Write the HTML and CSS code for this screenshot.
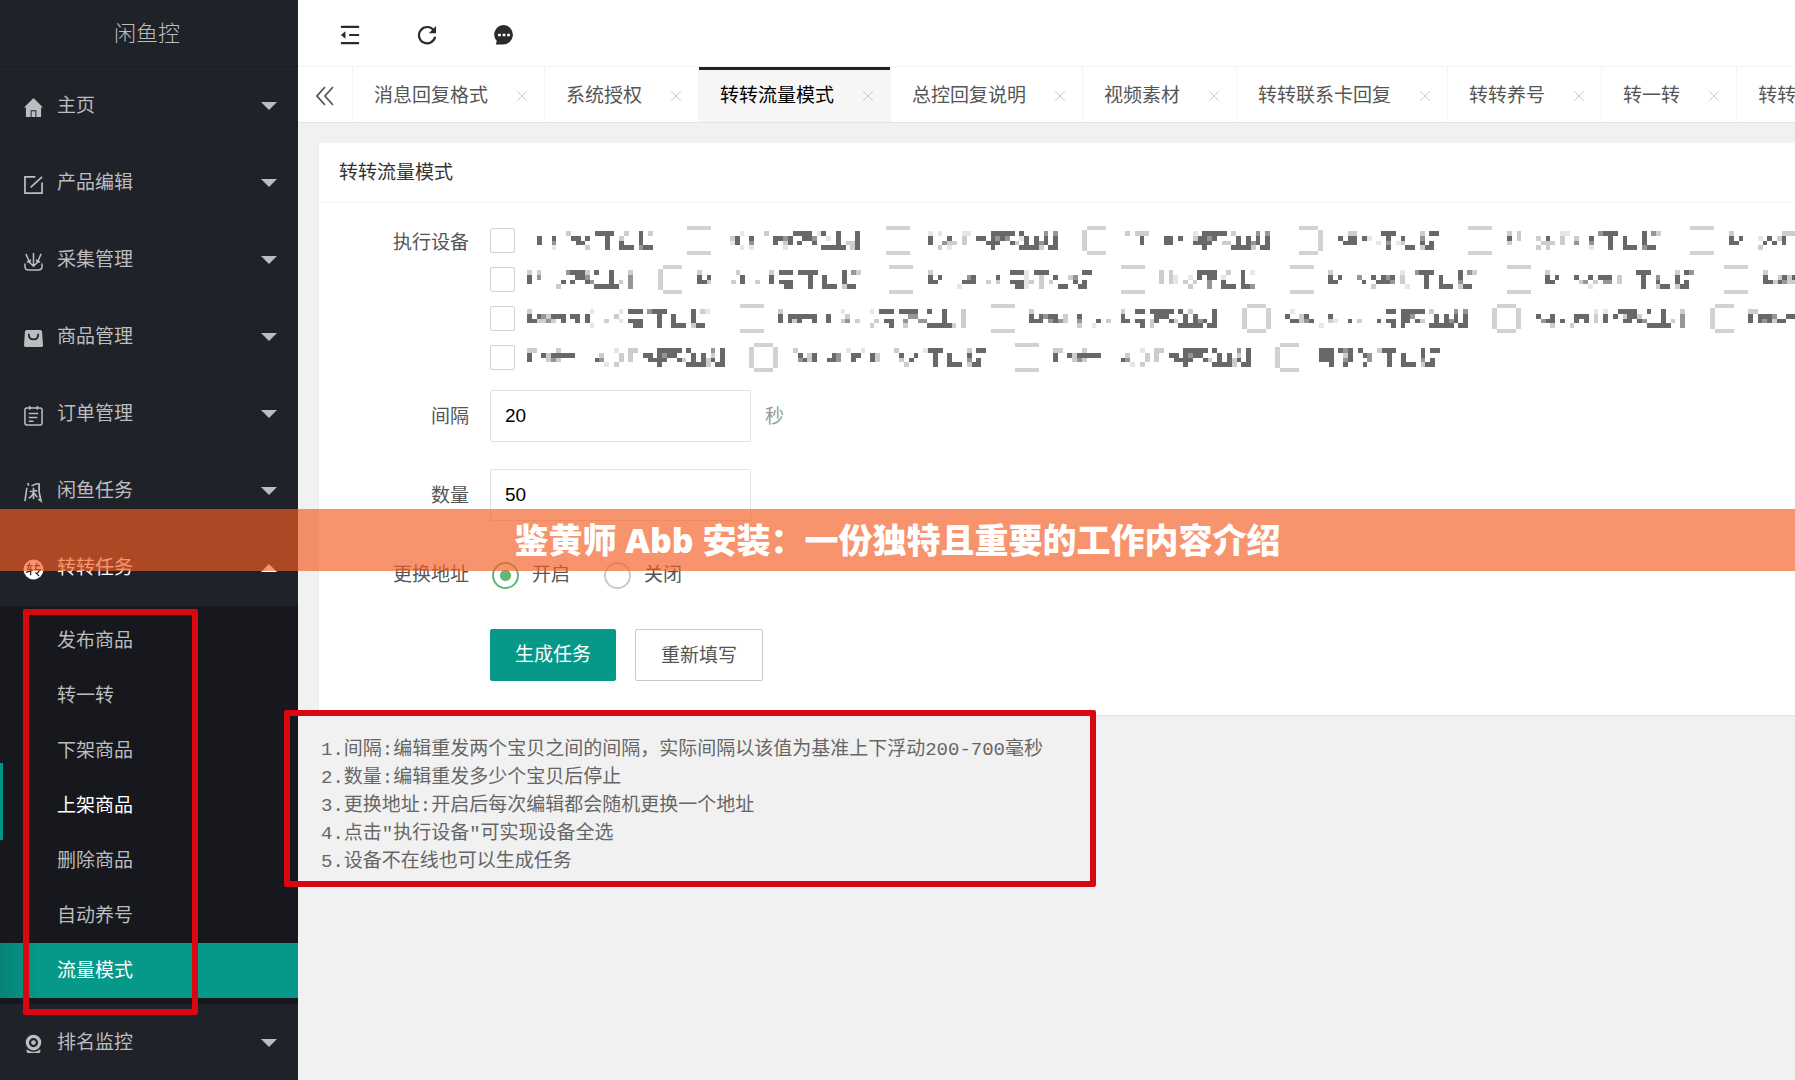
FILE: index.html
```html
<!DOCTYPE html>
<html lang="zh-CN">
<head>
<meta charset="utf-8">
<title>闲鱼控</title>
<link rel="stylesheet" href="styles.css">
</head>
<body>
<div class="layout">
  <aside class="sidebar">
    <div class="brand">闲鱼控</div>
    <nav>
      <ul class="menu">
        <li><a class="menu-link" href="#"><svg class="icon" viewBox="0 0 20 20"><path fill="currentColor" fill-rule="evenodd" d="M10 0 20 10h-2v10H2V10H0zM7 20h1v-6h4v6h1v-7H7z"/></svg><span>主页</span><i class="caret"></i></a></li>
        <li><a class="menu-link" href="#"><svg class="icon" viewBox="0 0 20 20" fill="none" stroke="currentColor" stroke-width="1.8"><path d="M12 2H1v17h18V8M7 13 19 2"/></svg><span>产品编辑</span><i class="caret"></i></a></li>
        <li><a class="menu-link" href="#"><svg class="icon" viewBox="0 0 20 20" fill="none" stroke="currentColor" stroke-width="1.6"><path d="M10 1v14M6 11l4 4 4-4M2 2l4 9M3 10l3 1 1-3M18 2l-4 9M17 10l-3 1-1-3M1 12v3q0 4 4 4h10q4 0 4-4v-3"/></svg><span>采集管理</span><i class="caret"></i></a></li>
        <li><a class="menu-link" href="#"><svg class="icon" viewBox="0 0 20 20"><path fill="currentColor" d="M3 1h14q2 0 2 2l1 14q0 2-2 2H2q-2 0-2-2L1 3q0-2 2-2z"/><path d="M5 5q0 6 5 6t5-6" fill="none" stroke="#20222a" stroke-width="1.8"/></svg><span>商品管理</span><i class="caret"></i></a></li>
        <li><a class="menu-link" href="#"><svg class="icon" viewBox="0 0 20 20" fill="none" stroke="currentColor" stroke-width="1.6"><rect x="1" y="2" width="18" height="18" rx="2"/><path d="M6 0v4M14 0v4M5 8h10M5 12h9M5 16h5"/></svg><span>订单管理</span><i class="caret"></i></a></li>
        <li><a class="menu-link" href="#"><svg class="icon" viewBox="0 0 20 20" fill="none" stroke="currentColor" stroke-width="1.7"><path d="M4 0l1 3M3 5 1 19M8 3q6-3 8-2-1 9 2 18l-3-2M6 9l8-1M10 5v12M10 9q-1 5-5 7M10 10l4 5"/></svg><span>闲鱼任务</span><i class="caret"></i></a></li>
        <li>
          <a class="menu-link is-open" href="#"><svg class="icon" viewBox="0 0 20 20"><circle cx="10" cy="10" r="10.5" fill="currentColor"/><path d="M3 6h6M6 3 4 10h5M7 7v9M2 13l7-2M11 6h6M14 3l-2 7h6M12 10h5l-3 4M12 13l4 4" fill="none" stroke="#20222a" stroke-width="1.3"/></svg><span>转转任务</span><i class="caret caret-up"></i></a>
          <ul class="submenu">
            <li><a href="#">发布商品</a></li>
            <li><a href="#">转一转</a></li>
            <li><a href="#">下架商品</a></li>
            <li><a class="is-hover" href="#">上架商品</a></li>
            <li><a href="#">删除商品</a></li>
            <li><a href="#">自动养号</a></li>
            <li><a class="is-active" href="#">流量模式</a></li>
            <li class="hover-bar" aria-hidden="true"></li>
            <li class="mark mark-menu" aria-hidden="true"></li>
          </ul>
        </li>
        <li><a class="menu-link" href="#"><svg class="icon" viewBox="0 0 20 20" fill="none" stroke="currentColor"><circle cx="10" cy="8" r="6.500" stroke-width="3.400"/><circle cx="10" cy="8" r="2.500" fill="currentColor" stroke="none"/><path d="M3 15q-1 3 1 4h12q2-1 1-4-3 3-7 3t-7-3z" fill="currentColor" stroke="none"/></svg><span>排名监控</span><i class="caret"></i></a></li>
      </ul>
    </nav>
  </aside>

  <div class="main">
    <header class="toolbar">
      <button type="button" aria-label="收起菜单"><svg viewBox="0 0 22 22"><path d="M1 2h20M10 11h11M1 20h20" stroke="currentColor" stroke-width="2.4"/><path d="M1 11l5-4v8z" fill="currentColor"/></svg></button>
      <button type="button" aria-label="刷新"><svg viewBox="0 0 22 22"><path d="M18.500 6A9 9 0 1 0 20 13" fill="none" stroke="currentColor" stroke-width="2.4"/><path d="M21 1v8h-8z" fill="currentColor"/></svg></button>
      <button type="button" aria-label="消息"><svg viewBox="0 0 22 22"><path d="M11 0A10.500 10.500 0 1 1 9 21.500H2l1-4A10.500 10.500 0 0 1 11 0z" fill="currentColor"/><path d="M4.500 9.500h3v3h-3zM9.500 9.500h3v3h-3zM14.500 9.500h3v3h-3z" fill="#fff"/></svg></button>
    </header>

    <nav class="tabs">
      <button class="tabs-prev" type="button" aria-label="向左"><svg viewBox="0 0 20 20"><path d="M10 1 2 10l8 9M18 1l-8 9 8 9" fill="none" stroke="currentColor" stroke-width="1.800"/></svg></button>
      <a class="tab" href="#">消息回复格式<svg viewBox="0 0 12 12"><path d="M1 1l10 10M11 1 1 11"/></svg></a>
      <a class="tab" href="#">系统授权<svg viewBox="0 0 12 12"><path d="M1 1l10 10M11 1 1 11"/></svg></a>
      <a class="tab is-current" href="#">转转流量模式<svg viewBox="0 0 12 12"><path d="M1 1l10 10M11 1 1 11"/></svg></a>
      <a class="tab" href="#">总控回复说明<svg viewBox="0 0 12 12"><path d="M1 1l10 10M11 1 1 11"/></svg></a>
      <a class="tab" href="#">视频素材<svg viewBox="0 0 12 12"><path d="M1 1l10 10M11 1 1 11"/></svg></a>
      <a class="tab" href="#">转转联系卡回复<svg viewBox="0 0 12 12"><path d="M1 1l10 10M11 1 1 11"/></svg></a>
      <a class="tab" href="#">转转养号<svg viewBox="0 0 12 12"><path d="M1 1l10 10M11 1 1 11"/></svg></a>
      <a class="tab" href="#">转一转<svg viewBox="0 0 12 12"><path d="M1 1l10 10M11 1 1 11"/></svg></a>
      <a class="tab" href="#">转转<svg viewBox="0 0 12 12"><path d="M1 1l10 10M11 1 1 11"/></svg></a>
    </nav>

    <main class="content">
      <section class="card">
        <h1 class="card-title">转转流量模式</h1>
        <form class="form">
          <div class="field field-devices">
            <span class="field-name">执行设备</span>
            <div class="devices" id="devices" role="group" aria-label="执行设备"></div>
          </div>
          <div class="field">
            <label class="field-name" for="interval">间隔</label>
            <input class="text" id="interval" type="text" value="20">
            <span class="unit">秒</span>
          </div>
          <div class="field">
            <label class="field-name" for="amount">数量</label>
            <input class="text" id="amount" type="text" value="50">
          </div>
          <div class="field">
            <span class="field-name">更换地址</span>
            <div class="radios">
              <label><input type="radio" name="swap" checked>开启</label>
              <label><input type="radio" name="swap">关闭</label>
            </div>
          </div>
          <div class="actions">
            <button class="btn btn-primary" type="button">生成任务</button>
            <button class="btn" type="reset">重新填写</button>
          </div>
        </form>
      </section>
      <div class="notes">
<pre>1.间隔:编辑重发两个宝贝之间的间隔，实际间隔以该值为基准上下浮动200-700毫秒
2.数量:编辑重发多少个宝贝后停止
3.更换地址:开启后每次编辑都会随机更换一个地址
4.点击"执行设备"可实现设备全选
5.设备不在线也可以生成任务</pre>
        <div class="mark mark-notes" aria-hidden="true"></div>
      </div>
    </main>
  </div>
</div>
<div class="banner">鉴黄师 Abb 安装：一份独特且重要的工作内容介绍</div>
<script src="devices.js"></script>
</body>
</html>
```
FILE: styles.css
```css
* { box-sizing: border-box; }

body {
  margin: 0;
  font: 19px/28px "Liberation Sans", "Noto Sans CJK SC", sans-serif;
  color: #555;
  background: #f1f1f1;
}

ul { list-style: none; margin: 0; padding: 0; }
a { color: inherit; text-decoration: none; }
button, input { font: inherit; color: inherit; }

.layout {
  display: flex;
  height: 100vh;
  overflow: hidden;
}

/* Sidebar */
.sidebar {
  flex: none;
  width: 298px;
  background: #20222a;
  color: #bcbdbf;
}
.brand {
  height: 67px;
  line-height: 68px;
  padding-right: 4px;
  text-align: center;
  font-size: 22px;
  font-weight: 300;
  border-bottom: 1px solid #1a1c22;
}
.menu-link {
  display: flex;
  align-items: center;
  height: 77px;
  padding: 1px 21px 0 24px;
}
.menu-link span { flex: 1; margin-left: 14px; }
.icon { width: 19px; height: 19px; margin-top: 2px; overflow: visible; }
.caret {
  border: 8px solid transparent;
  border-top-color: currentColor;
  border-bottom-width: 0;
}
.caret-up {
  border-top-width: 0;
  border-bottom: 8px solid currentColor;
}
.is-open { color: #fff; }
.submenu {
  position: relative;
  padding: 7px 0 6px;
  background: #16181d;
}
.submenu a {
  display: block;
  padding-left: 57px;
  line-height: 55px;
}
.submenu .is-hover { color: #fff; }
.submenu .is-active {
  color: #fff;
  background: linear-gradient(90deg, #078375, #069888 40px);
}
.hover-bar {
  position: absolute;
  left: 0;
  top: 157px;
  width: 3px;
  height: 77px;
  background: #009688;
}

/* Red frames drawn over the page */
.mark {
  position: absolute;
  border: 6px solid #d9070f;
  border-radius: 2px;
  pointer-events: none;
}
.mark-menu { left: 23px; right: 100px; top: 3px; bottom: -11px; }
.mark-notes { left: -35px; top: -5px; width: 812px; height: 177px; }

/* Top bar */
.main { flex: 1; min-width: 0; }
.toolbar {
  display: flex;
  gap: 33px;
  height: 67px;
  padding: 0 30px;
  align-items: center;
  background: #fff;
  border-bottom: 1px solid #f4f4f4;
}
.toolbar button {
  display: flex;
  justify-content: center;
  width: 44px;
  padding: 3px 0 0;
  border: 0;
  background: none;
  color: #2b2b2b;
}
.toolbar svg { width: 22px; height: 20px; }

.tabs {
  display: flex;
  height: 56px;
  overflow: hidden;
  background: #fff;
  border-bottom: 1px solid #e3e3e3;
}
.tabs-prev {
  flex: none;
  display: flex;
  align-items: center;
  justify-content: center;
  width: 55px;
  padding: 2px 0 0;
  border: 0;
  border-right: 1px solid #f4f4f4;
  background: none;
}
.tabs-prev svg { width: 20px; height: 20px; }
.tab {
  flex: none;
  display: flex;
  align-items: center;
  gap: 28px;
  padding: 2px 16px 0 21px;
  border-right: 1px solid #f4f4f4;
}
.tab svg {
  width: 12px;
  height: 12px;
  stroke: #ccc;
  fill: none;
}
.is-current {
  background: #f6f6f6;
  color: #000;
  box-shadow: inset 0 3px #20222a;
}

/* Card */
.content { padding: 20px 0 0 21px; }
.card {
  background: #fff;
  border-radius: 2px 0 0 2px;
  box-shadow: 0 1px 2px rgba(0, 0, 0, .06);
}
.card-title {
  margin: 0;
  padding: 1px 20px 0;
  font-size: 19px;
  font-weight: 400;
  line-height: 58px;
  color: #333;
  border-bottom: 1px solid #f6f6f6;
}
.form { padding: 18px 0 34px; overflow: hidden; }
.field {
  display: flex;
  align-items: center;
  height: 52px;
  margin-bottom: 27px;
}
.field-name {
  flex: none;
  width: 150px;
  padding-top: 2px;
  margin-right: 21px;
  text-align: right;
}
.field-devices {
  align-items: flex-start;
  height: auto;
  margin-bottom: 13px;
}
.field-devices .field-name { line-height: 39px; }

.device-row { display: flex; height: 39px; }
.device { flex: none; display: flex; align-items: center; }
.device svg { flex: none; height: 19px; }
.device input {
  appearance: none;
  flex: none;
  width: 25px;
  height: 25px;
  margin: 0;
  border: 1px solid #d2d2d2;
  border-radius: 2px;
}

/* Masked tick boxes keep only some edges and no corners */
.device .bars, .device .open-right, .device .open-left, .device .ring {
  width: 24px;
  height: 29px;
  border: 0 solid #d2d2d2;
  border-width: 4px 0;
  border-radius: 0;
}
.device .open-right {
  border-left-width: 5px;
  clip-path: polygon(5px 0, 100% 0, 100% 100%, 5px 100%, 5px 25px, 0 25px, 0 4px, 5px 4px);
}
.device .open-left {
  border-right-width: 5px;
  clip-path: polygon(0 0, 19px 0, 19px 4px, 100% 4px, 100% 25px, 19px 25px, 19px 100%, 0 100%);
}
.device .ring {
  width: 29px;
  border-width: 4px 5px;
  clip-path: polygon(5px 0, 24px 0, 24px 4px, 100% 4px, 100% 25px, 24px 25px, 24px 100%, 5px 100%, 5px 25px, 0 25px, 0 4px, 5px 4px);
}

.text {
  width: 261px;
  height: 52px;
  padding: 0 14px;
  border: 1px solid #e2e2e2;
  border-radius: 2px;
  background: #fff;
  color: #000;
}
.unit { padding-top: 2px; margin-left: 14px; color: #999; }

.radios { display: flex; gap: 34px; padding: 2px 0 0 2px; }
.radios label { display: flex; align-items: center; gap: 13px; }
.radios input {
  appearance: none;
  width: 27px;
  height: 27px;
  margin: 0;
  border: 2px solid #c9c9c9;
  border-radius: 50%;
}
.radios input:checked {
  border-color: #5fb878;
  background: radial-gradient(circle, #5fb878 5px, transparent 6px);
}

.actions { display: flex; gap: 19px; padding-left: 171px; margin-top: 29px; }
.btn {
  height: 52px;
  padding: 1px 25px 0;
  border: 1px solid #c9c9c9;
  border-radius: 2px;
  background: #fff;
}
.btn-primary {
  padding: 0 24px;
  border-color: #069888;
  background: #069888;
  color: #fff;
}

/* Notes */
.notes { position: relative; padding: 21px 0 0 2px; }
.notes pre {
  margin: 0;
  font: 19px/28px "Liberation Mono", "Noto Sans CJK SC", monospace;
  color: #666;
}

/* Title strip over the page */
.banner {
  position: absolute;
  left: 0;
  right: 0;
  top: 509px;
  line-height: 62px;
  text-align: center;
  font-family: "Noto Sans", "Noto Sans CJK SC", sans-serif;
  font-size: 34px;
  font-weight: 900;
  color: #fff;
  background: rgba(244, 93, 34, .66);
}
```
FILE: devices.js
```js
// Device names are masked: each is a mosaic of four rows of cells.
// "#" dark, "+" medium, "-" light, ":" faint.
const CELL = 4.82;
const ORIGIN = 490;
const SHADES = { '#': '#686868', '+': '#969696', '-': '#cdcdcd', ':': '#e6e6e6' };

const LONG_NAME = [
  '--....-...........:..--....#####.#....+.#',
  '#..#-#####.....-...-.-..##.#+##...#.#.-.#',
  '#...-+-.......#+...-.-...####..#-.#.#-#.#',
  '................:.-........#.....####-.##'];

// [box style, box start, name start, mosaic]
const ROWS = [
  [
    ['', 490, 537, ['......-.....####..-..#.-', '#..#...##.#...#..-...#..', '#..+....##....#..#...#..', '...:......-...#..###.+##']],
    ['bars', 687, 730, ['..:....-.....####.:#..#...#', '-#..#....##+#..##+..:.#...#', ':#..+....#.-#.#..#....#.--#', '..:.:......:.......#####.-#']],
    ['bars', 886, 928, [':.:....::....#####.#....+.+', '#...#..-..##.#+#+..:#.#.#.#', '#..+--.-....###..#-.#.#+#.#', '..-.:........#.....####-.##']],
    ['open-right', 1082, 1125, ['-.---.........:.#####.-....+.+', '...#....##.#..-##+#....#.#.#.#', '...#....##....####..--.#.#+#.#', '................#.....####-.##']],
    ['open-left', 1299, 1338, ['..--.....###.....-.##', '#.##.#:...#..#...+...', '.###....:.+.:-...#.#.', '..........#...##.-##.']],
    ['bars', 1468, 1507, ['-.-........::......+###.....#.+-', '#.-...-.#..-..-..#...#..#...#...', '-......---.-..+..+...#..#...#...', '......-.-........:...#..###.+##.']],
    ['bars', 1690, 1729, ['-..........---', '#.#...:.#.-#..', '##.....#.#.#..', '......-.......']]
  ],
  [
    ['', 490, 527, ['-.-.....+###-.#..#...-', '#.+.......##+....#...+', '#......#.#..#+...#.-.+', '......-.......#####..+']],
    ['open-right', 658, 697, ['-.......-......-.###.####.....#.+-', '#.#......#.....#.......#..#...#...', '##-....-.#..-..#.###...#..#...#...', '..................##...#..###.-##.']],
    ['bars', 889, 928, ['-................###:.###.......##', '#.#.....+#....#.....:..-..#..-+...', '##.....###..-.-..###:-.-.-....#.#.', '......:...........##:..-...##..##.']],
    ['bars', 1121, 1159, ['-.-.....####..-..#.:', '-.-:..:.#.##.:...#..', '-.-:.-.-..+..#...#..', '......-...+..###.##+']],
    ['bars', 1290, 1328, ['-..............:..+###.....#.+-', '#.#...+..#.#+#.-....#..#...#...', '##.....#..###+.-....#..#...+...', '.........-......:...#..###.-##.']],
    ['bars', 1507, 1545, ['-..................###.....-.#+', '#.#...#..#.###.-....#..+...#...', '##.....-+.-.++.-....#..#...#.#.', '.........:..........#..-##.-##.']],
    ['bars', 1724, 1763, ['-......', '#..-#-#', '##-#+--', '.......']]
  ],
  [
    ['', 490, 527, ['-............:.....:.###.+###.....#.-:', '#.#+-###.##.#.....-........#..#...#...', '##--+-.#..#.#...-..:.###...#..#...#...', '.............:........##...#..###.-##.']],
    ['bars', 740, 778, ['-............:.....:.###.####..#..#...-', '#.######..#...-............++.....#...-', '#.#-#..#..#..-+.-...-.##..+..++...#...-', '...................-...#..-....#####-.-']],
    ['bars', 991, 1029, ['-..................-..##.#####.#.-....#', '#.#+##.-..#........#......###...#.#...#', '###.+#+-..+...#.-..##.##.-#..#-.#.#+#.#', '..........-..:.........#.-.....#####.##']],
    ['ring', 1242, 1285, ['.:...................##.#####.-....+.+', '#..-#....#..............##+....#.#.#.#', '.##-+#...-:..#.-...#.##.##.#-..#.#+#.#', '.......:..............#.#.....#####.##']],
    ['ring', 1492, 1536, ['............:.:..####..#..#...-', '#..#....###.-.#.#.-##-....#...+', '.+##.#..#.#.-.#...##.#+...#.-.+', '...-...-...............#####..+']],
    ['open-right', 1710, 1748, ['--........', '#.###+..##', '#.#+#-##..', '..........']]
  ],
  [
    ['', 490, 527, LONG_NAME],
    ['ring', 749, 793, ['-..........:..:......-.....:###.....-.##', '.#.-#...#+..##..#-....#..#...#..#...#...', '.+#-#..##+..#...#-....-.#....#..#...+.#.', '.......................-.....#..###.-##.']],
    ['bars', 1015, 1053, LONG_NAME],
    ['open-right', 1275, 1319, ['###.#+#.#...-###.....#.##', '###..-#..#+...#..#...#...', '###..+#...+...#..#...+.#.', '..#..#...#....#..###.-##.']]
  ]
];

function mosaic(lines, width) {
  const cells = lines.flatMap((line, y) => [...line].map((c, x) =>
    SHADES[c] ? `<rect x="${x}" y="${y}" width="1" height="1" fill="${SHADES[c]}"/>` : ''));
  return `<svg viewBox="0 0 ${lines[0].length} 4" style="width:${width}px" preserveAspectRatio="none" shape-rendering="crispEdges" aria-hidden="true">${cells.join('')}</svg>`;
}

const BOX_WIDTH = { '': 25, ring: 29 };
let number = 0;
document.getElementById('devices').innerHTML = ROWS.map(row => {
  let end = ORIGIN;
  const items = row.map(([kind, box, name, lines]) => {
    const width = Math.round(lines[0].length * CELL);
    const gap = name - box - (BOX_WIDTH[kind] || 24);
    const before = box - end;
    end = name + width;
    number += 1;
    return `<label class="device" style="margin-left:${before}px;gap:${gap}px"><input type="checkbox" class="${kind}" aria-label="设备 ${number}">${mosaic(lines, width)}</label>`;
  });
  return `<div class="device-row">${items.join('')}</div>`;
}).join('');
```
